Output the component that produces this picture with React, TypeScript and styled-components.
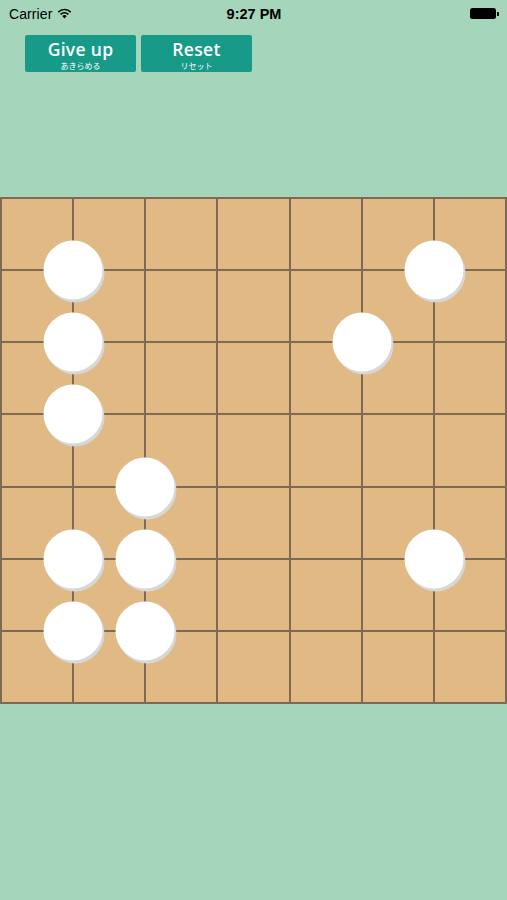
import React from "react";
import styled, { createGlobalStyle } from "styled-components";

const Global = createGlobalStyle`
  html, body { margin: 0; padding: 0; background: #a5d5bb; }
  body { font-family: "Liberation Sans", Arial, sans-serif; width: 507px; height: 900px; overflow: hidden; }
`;

const Screen = styled.div`
  width: 507px;
  height: 900px;
  background: #a5d5bb;
  display: flex;
  flex-direction: column;
`;

const StatusBar = styled.div`
  height: 27px;
  display: grid;
  grid-template-columns: 1fr auto 1fr;
  align-items: center;
  padding: 0 8px 0 9px;
  font-size: 14px;
  color: #000;
`;

const Carrier = styled.div`
  display: flex;
  align-items: center;
  gap: 5px;
  letter-spacing: 0.1px;
`;

const Clock = styled.div`
  font-weight: bold;
  font-size: 14.5px;
`;

const BatteryWrap = styled.div`
  justify-self: end;
  display: flex;
  align-items: center;
`;

const Battery = styled.div`
  width: 26px;
  height: 11px;
  background: #000;
  border-radius: 2.5px;
`;

const Nub = styled.div`
  width: 2px;
  height: 4px;
  background: #000;
  border-radius: 0 1px 1px 0;
  margin-left: 1px;
`;

const Toolbar = styled.div`
  display: flex;
  gap: 5px;
  padding: 8px 0 0 25px;
`;

const Button = styled.button`
  width: 111px;
  height: 37px;
  border: none;
  border-radius: 2px;
  background: #179a88;
  color: #fff;
  display: flex;
  flex-direction: column;
  align-items: center;
  justify-content: center;
  padding: 0;
  gap: 0;
`;

const Main = styled.span`
  font-family: "Open Sans", "Liberation Sans", sans-serif;
  font-weight: 600;
  font-size: 17.5px;
  line-height: normal;
  letter-spacing: 0.3px;
`;

const Sub = styled.span`
  font-family: "Noto Sans CJK JP", sans-serif;
  font-size: 8px;
  line-height: normal;
  margin-top: -1px;
`;

const Board = styled.div`
  margin-top: 125px;
  position: relative;
  width: 507px;
  height: 507px;
  box-sizing: border-box;
  background: #e0b985;
  border-left: 2px solid #7d6a55;
  border-top: 2px solid #7d6a55;
  display: grid;
  grid-template-columns: repeat(7, 1fr);
  grid-template-rows: repeat(7, 1fr);
`;

const Cell = styled.div`
  border-right: 2px solid #7d6a55;
  border-bottom: 2px solid #7d6a55;
`;

const CELL = 505 / 7;

const Stone = styled.div`
  position: absolute;
  width: 59px;
  height: 59px;
  border-radius: 50%;
  background: #ffffff;
  box-shadow: 2px 3px 0 0 #d7d7d7;
  transform: translate(-50%, -50%);
`;

const stones: [number, number][] = [
  [1, 1], [6, 1], [1, 2], [5, 2], [1, 3], [2, 4], [1, 5], [2, 5], [6, 5], [1, 6], [2, 6],
];

export default function App() {
  return (
    <Screen>
      <Global />
      <StatusBar>
        <Carrier>
          <span>Carrier</span>
          <svg width="15" height="11" viewBox="0 0 15 11">
            <path d="M7.5 10.5 L5.2 8.1 A3.3 3.3 0 0 1 9.8 8.1 Z" fill="#000" />
            <path d="M3.6 6.4 A5.5 5.5 0 0 1 11.4 6.4" stroke="#000" strokeWidth="1.6" fill="none" />
            <path d="M1.3 4.1 A8.8 8.8 0 0 1 13.7 4.1" stroke="#000" strokeWidth="1.6" fill="none" />
          </svg>
        </Carrier>
        <Clock>9:27 PM</Clock>
        <BatteryWrap>
          <Battery />
          <Nub />
        </BatteryWrap>
      </StatusBar>
      <Toolbar>
        <Button>
          <Main>Give up</Main>
          <Sub>あきらめる</Sub>
        </Button>
        <Button>
          <Main>Reset</Main>
          <Sub>リセット</Sub>
        </Button>
      </Toolbar>
      <Board>
        {Array.from({ length: 49 }).map((_, i) => (
          <Cell key={i} />
        ))}
        {stones.map(([c, r], i) => (
          <Stone key={i} style={{ left: c * CELL - 1, top: r * CELL - 1 }} />
        ))}
      </Board>
    </Screen>
  );
}
